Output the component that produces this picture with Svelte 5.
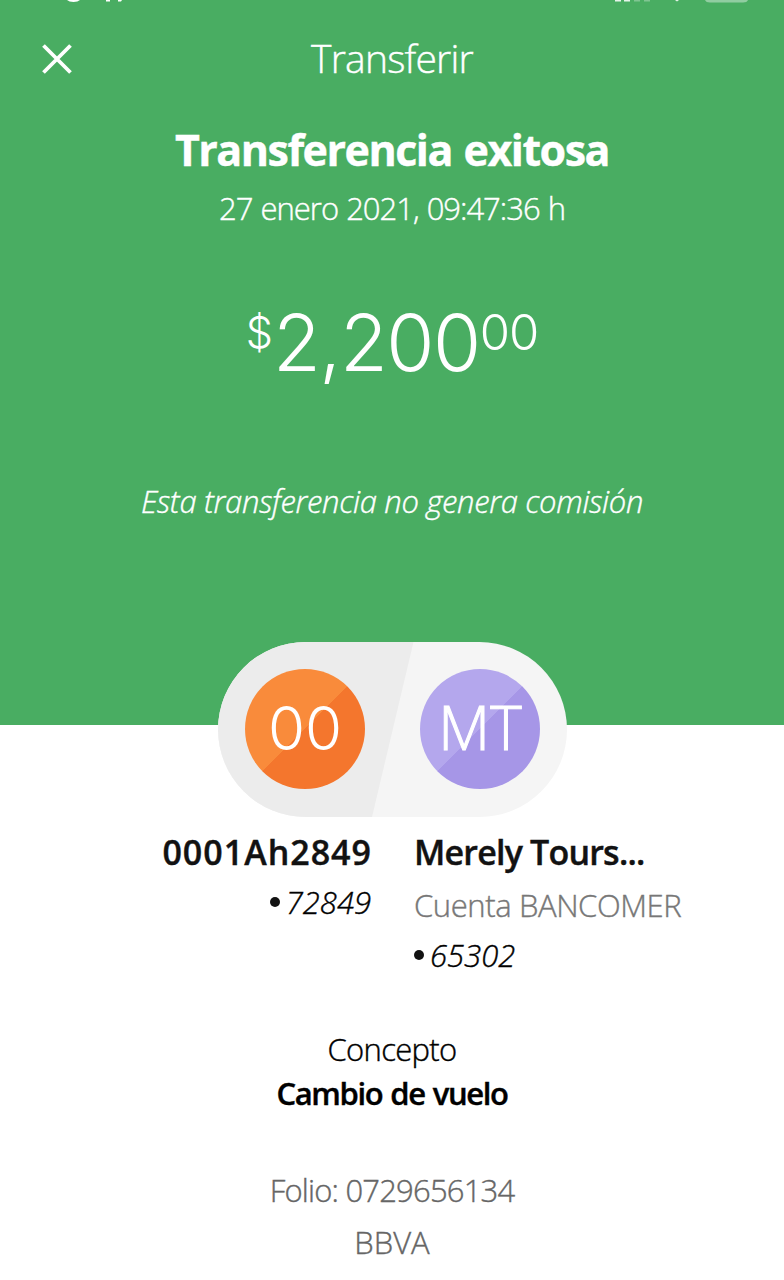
<script>
    let transfer = {
        date: '27 enero 2021, 09:47:36 h',
        amount: '2,200',
        cents: '00',
        note: 'Esta transferencia no genera comisión',
        concept: 'Cambio de vuelo',
        folio: '0729656134',
        bank: 'BBVA'
    };

    let origin = { initials: '00', name: '0001Ah2849', account: '72849' };
    let target = { initials: 'MT', name: 'Merely Tours...', type: 'Cuenta BANCOMER', account: '65302' };
</script>

<main>
    <section class="hero">
        <!-- Bottom edge of the phone status bar -->
        <svg class="status" width="784" height="4" viewBox="0 0 784 4">
            <path d="M67 0h13q-2 2-6.500 2t-6.500-2z" fill="#fff" />
            <path d="M106 0h4v1.500h-4zM118 0h4l-1 1.500h-3z" fill="#fff" />
            <path d="M615 0h6v1.500h-6zM624 0h6v1.500h-6z" fill="#e6f4ea" />
            <path d="M634 0h6v1.500h-6zM644 0h6v1.500h-6z" fill="#80c592" />
            <path d="M675 0h4l-2 1.500z" fill="#e6f4ea" />
            <path d="M705 0h43q-1 2.500-5 2.500h-33q-4 0-5-2.500z" fill="#91cda1" />
        </svg>

        <header>
            <button class="close" aria-label="Cerrar">
                <svg width="32" height="32" viewBox="0 0 32 32">
                    <path d="M2.500 2.500l27 27M29.500 2.500l-27 27" stroke="#fff" stroke-width="3.800" />
                </svg>
            </button>
            <h1>Transferir</h1>
        </header>

        <h2>Transferencia exitosa</h2>
        <p class="date">{transfer.date}</p>
        <p class="amount"><span class="currency">$</span><span class="whole">{transfer.amount}</span><span class="cents">{transfer.cents}</span></p>
        <p class="note">{transfer.note}</p>
    </section>

    <div class="pill">
        <div class="avatar orange">{origin.initials}</div>
        <div class="avatar purple">{target.initials}</div>
    </div>

    <section class="accounts">
        <div class="origin">
            <p class="name">{origin.name}</p>
            <p class="number"><i class="dot"></i><span>{origin.account}</span></p>
        </div>
        <div class="target">
            <p class="name">{target.name}</p>
            <p class="type">{target.type}</p>
            <p class="number"><i class="dot"></i><span>{target.account}</span></p>
        </div>
    </section>

    <section class="details">
        <p class="label">Concepto</p>
        <p class="concept">{transfer.concept}</p>
        <p class="folio">Folio: {transfer.folio}</p>
        <p class="bank">{transfer.bank}</p>
    </section>
</main>

<style>
    :global(body) {
        background: #fff;
    }

    main {
        width: 784px;
        height: 1280px;
        overflow: hidden;
        font-family: "Open Sans", "Noto Sans", sans-serif;
        font-size: 31px;
        font-weight: 300;
        line-height: 40px;
        color: #121212;
        -webkit-text-stroke: 0.4px;
    }

    h1, h2, p {
        margin: 0;
        white-space: nowrap;
    }

    .hero {
        height: 725px;
        background: #49ad62;
        color: #fff;
        text-align: center;
    }

    .status {
        display: block;
    }

    header {
        display: grid;
        grid-template-columns: 112px 1fr 112px;
        align-items: center;
        height: 48px;
        margin-top: 30px;
    }

    .close {
        width: 32px;
        height: 34px;
        margin-left: 41px;
        padding: 2px 0 0;
        border: none;
        background: none;
    }

    .close svg {
        display: block;
    }

    h1 {
        font-size: 39px;
        font-weight: 300;
        line-height: 48px;
        letter-spacing: -0.8px;
    }

    h2 {
        margin-top: 40px;
        font-size: 43px;
        font-weight: 700;
        line-height: 56px;
        letter-spacing: -1.5px;
        word-spacing: 2px;
    }

    .date {
        margin-top: 10px;
        letter-spacing: -1px;
        word-spacing: 1px;
    }

    .amount {
        display: flex;
        justify-content: center;
        height: 88px;
        margin-top: 70px;
        font-family: Inter, "Open Sans", sans-serif;
        font-size: 78px;
        line-height: 90px;
        -webkit-text-stroke: 0;
    }

    .currency {
        font-size: 43px;
        line-height: 68px;
    }

    .whole {
        letter-spacing: -1.5px;
    }

    .cents {
        font-size: 49px;
        line-height: 70px;
        letter-spacing: -1px;
    }

    .note {
        margin-top: 95px;
        font-style: italic;
        letter-spacing: -0.3px;
    }

    .pill {
        display: flex;
        justify-content: space-between;
        align-items: center;
        box-sizing: border-box;
        position: relative;
        width: 349px;
        height: 175px;
        margin: -83px auto 0 218px;
        padding: 0 27px 1px;
        border-radius: 88px;
        overflow: hidden;
        background: #f5f5f5;
    }

    /* Slanted darker half behind the origin avatar */
    .pill::before {
        content: "";
        position: absolute;
        inset: 0;
        background: #ececec;
        clip-path: polygon(0 0, 195.5px 0, 154px 100%, 0 100%);
    }

    .avatar {
        position: relative;
        width: 120px;
        height: 120px;
        border-radius: 50%;
        font-size: 60px;
        line-height: 117px;
        text-align: center;
        color: #fff;
        -webkit-text-stroke: 1px;
    }

    .orange {
        background: linear-gradient(135deg, #f98b3b 50%, #f4762d 50%);
        font-family: Inter, "Open Sans", sans-serif;
        line-height: 118px;
        -webkit-text-stroke: 0;
    }

    .purple {
        background: linear-gradient(135deg, #b4a7ed 50%, #a696e7 50%);
    }

    .accounts {
        display: grid;
        grid-template-columns: 371px 1fr;
        column-gap: 43px;
        height: 146px;
        margin-top: 12px;
    }

    .origin {
        text-align: right;
    }

    .name {
        font-size: 34px;
        font-weight: 600;
        line-height: 46px;
        letter-spacing: -0.8px;
    }

    .origin .name {
        margin-right: -1px;
        letter-spacing: 1px;
    }

    .number {
        display: flex;
        align-items: center;
        gap: 6px;
        font-style: italic;
        color: #000;
    }

    .origin .number {
        justify-content: flex-end;
        margin-top: 7px;
    }

    .target .number {
        margin-top: 10px;
    }

    .dot {
        width: 10px;
        height: 10px;
        border-radius: 50%;
        background: #121212;
    }

    .type {
        margin-top: 10px;
        letter-spacing: -0.4px;
        color: #777;
    }

    .details {
        margin-top: 54px;
        text-align: center;
    }

    .label {
        letter-spacing: -0.7px;
        color: #000;
    }

    .concept {
        margin-top: 4px;
        font-weight: 600;
        letter-spacing: -1.4px;
        word-spacing: 1.5px;
        color: #000;
    }

    .folio {
        margin-top: 57px;
        letter-spacing: -0.8px;
        color: #666;
    }

    .bank {
        margin-top: 12px;
        color: #666;
    }
</style>
